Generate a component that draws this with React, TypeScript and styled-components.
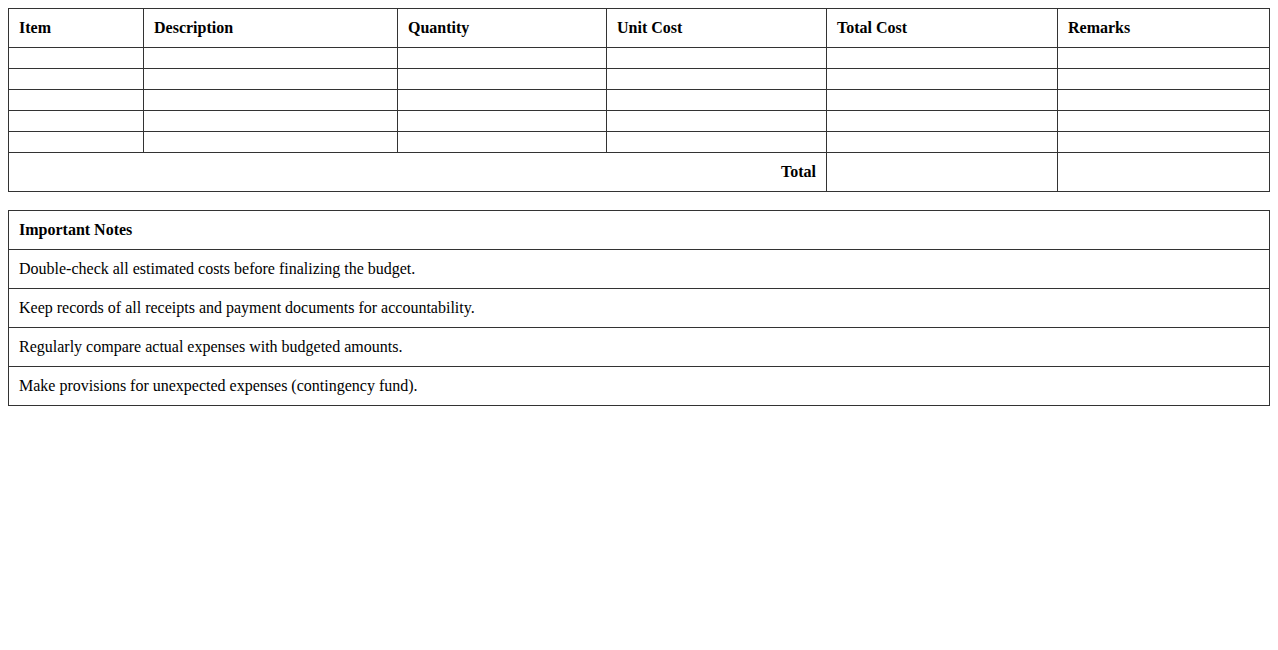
import React from "react";
import styled, { createGlobalStyle } from "styled-components";

const GlobalStyle = createGlobalStyle`
  body {
    margin: 8px;
    font-family: "Liberation Serif", "Times New Roman", serif;
    font-size: 16px;
    color: #000;
    background: #fff;
  }
`;

const columns: { label: string; width?: number }[] = [
  { label: "Item", width: 135 },
  { label: "Description", width: 254 },
  { label: "Quantity", width: 209 },
  { label: "Unit Cost", width: 220 },
  { label: "Total Cost", width: 231 },
  { label: "Remarks" },
];

const notes = [
  "Double-check all estimated costs before finalizing the budget.",
  "Keep records of all receipts and payment documents for accountability.",
  "Regularly compare actual expenses with budgeted amounts.",
  "Make provisions for unexpected expenses (contingency fund).",
];

const App: React.FC = () => {
  return (
    <>
      <GlobalStyle />
      <Table $gap={18}>
        <colgroup>
          {columns.map((c) => (
            <col key={c.label} style={c.width ? { width: c.width } : undefined} />
          ))}
        </colgroup>
        <thead>
          <tr>
            {columns.map((c) => (
              <HeadCell key={c.label}>{c.label}</HeadCell>
            ))}
          </tr>
        </thead>
        <tbody>
          {[0, 1, 2, 3, 4].map((row) => (
            <tr key={row}>
              {columns.map((c) => (
                <Cell key={c.label} />
              ))}
            </tr>
          ))}
          <tr>
            <HeadCell colSpan={4} $align="right">
              Total
            </HeadCell>
            <Cell />
            <Cell />
          </tr>
        </tbody>
      </Table>

      <Table>
        <thead>
          <tr>
            <HeadCell>Important Notes</HeadCell>
          </tr>
        </thead>
        <tbody>
          {notes.map((n) => (
            <tr key={n}>
              <Cell>{n}</Cell>
            </tr>
          ))}
        </tbody>
      </Table>
    </>
  );
};

const Table = styled.table<{ $gap?: number }>`
  width: 100%;
  border-collapse: collapse;
  table-layout: fixed;
  margin-bottom: ${(p) => p.$gap ?? 0}px;
`;

const Cell = styled.td`
  border: 1px solid #333;
  padding: 10px;
  text-align: left;
  line-height: 18px;
`;

const HeadCell = styled.th<{ $align?: string }>`
  border: 1px solid #333;
  padding: 10px;
  line-height: 18px;
  font-weight: bold;
  text-align: ${(p) => p.$align ?? "left"};
`;

export default App;
